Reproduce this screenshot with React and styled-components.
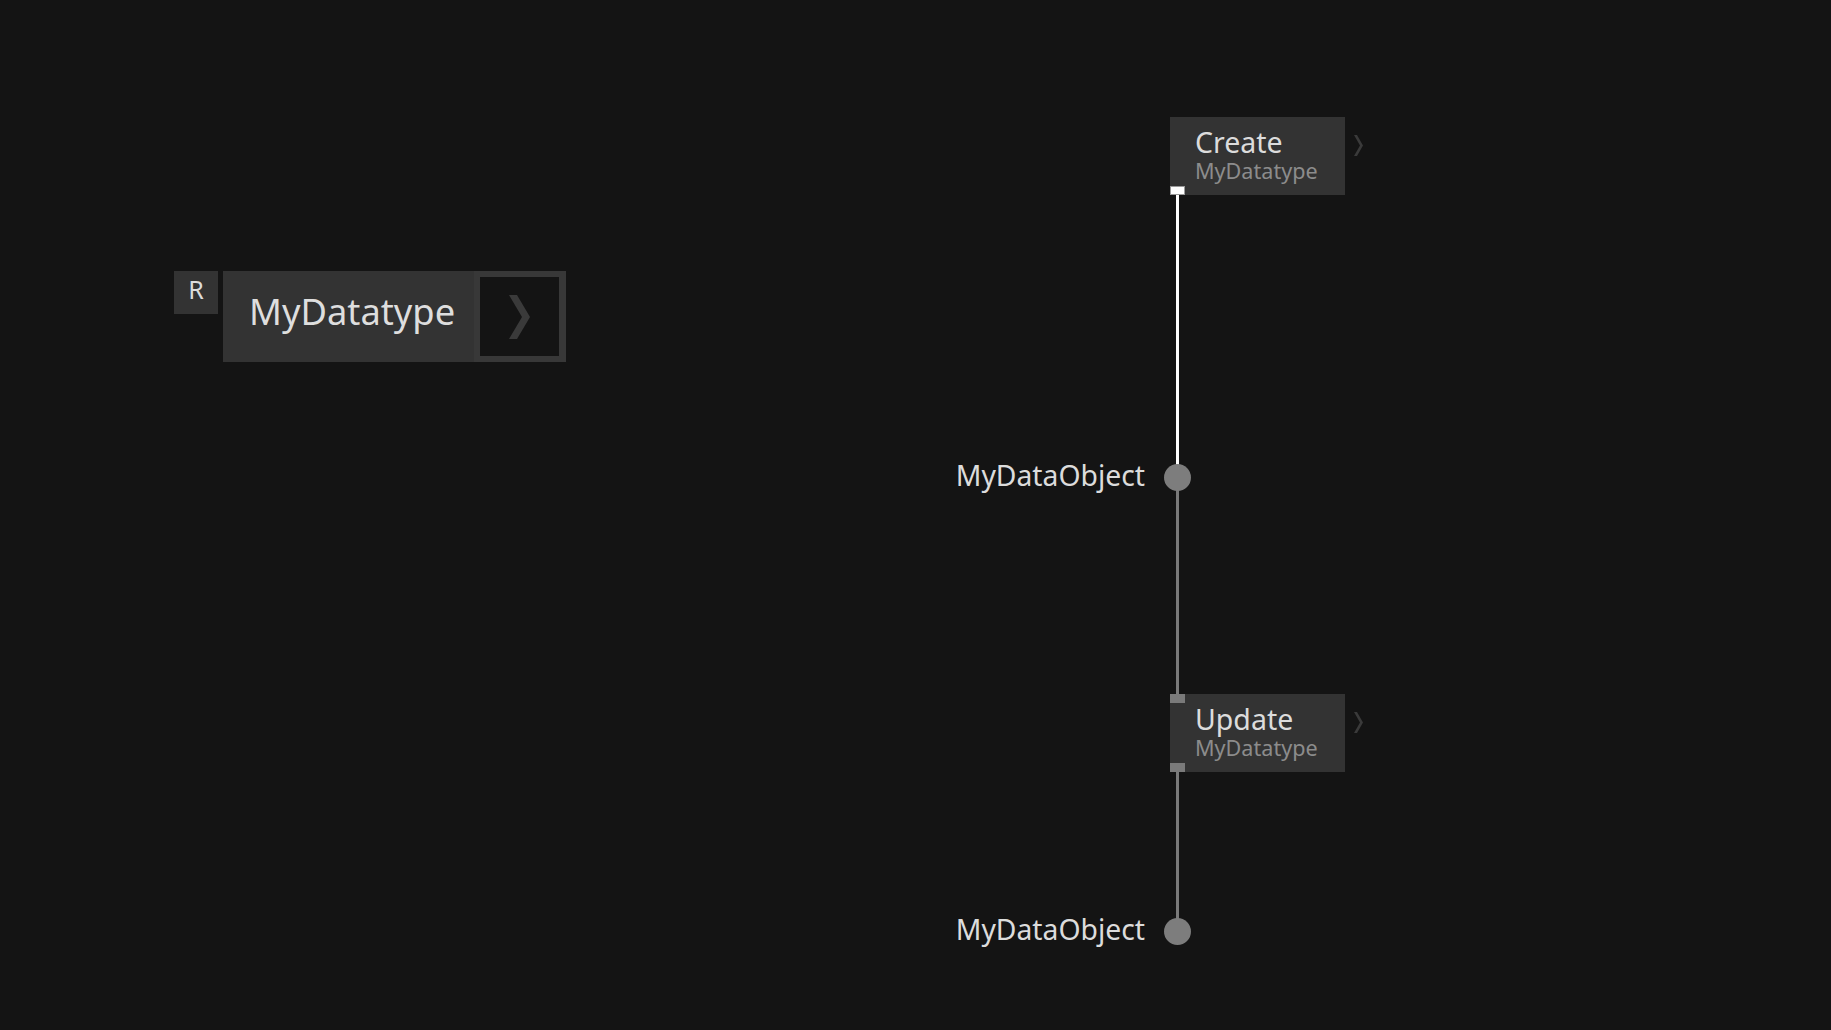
import React from "react";
import styled, { createGlobalStyle } from "styled-components";

const GlobalStyle = createGlobalStyle`
  html, body {
    margin: 0;
    padding: 0;
    background: #141414;
    font-family: "Noto Sans", "Open Sans", sans-serif;
  }
`;

const Canvas = styled.div`
  position: relative;
  width: 100vw;
  height: 100vh;
  overflow: hidden;
  background: #141414;
`;

/* ---- type node (top left) ---- */

const TypeNode = styled.div`
  position: absolute;
  left: 174px;
  top: 271px;
  display: flex;
  align-items: flex-start;
  gap: 5px;
`;

const Badge = styled.div`
  width: 44px;
  height: 43px;
  background: #333333;
  color: #dcdcdc;
  font-size: 25px;
  line-height: 37px;
  text-align: center;
`;

const TypeBody = styled.div`
  width: 343px;
  height: 91px;
  background: #333333;
  display: flex;
  align-items: stretch;
  justify-content: space-between;
  padding-left: 26px;
  box-sizing: border-box;
`;

const TypeTitle = styled.div`
  align-self: center;
  color: #dedede;
  font-size: 36.3px;
  line-height: 1;
  margin-bottom: 10px;
`;

const ExpandBox = styled.div`
  width: 79px;
  background: #141414;
  border: 6px solid #383838;
  border-right-width: 7px;
  display: flex;
  align-items: center;
  justify-content: center;
`;

/* ---- process nodes ---- */

const NodeWrap = styled.div`
  position: absolute;
  left: 1170px;
  top: ${(p) => p.$top}px;
  display: flex;
  align-items: flex-start;
  gap: 9px;
`;

const NodeBox = styled.div`
  position: relative;
  width: 175px;
  height: 78px;
  background: #333333;
  padding: 9px 0 0 25px;
  box-sizing: border-box;
`;

const NodeTitle = styled.div`
  color: #dcdcdc;
  font-size: 28.5px;
  line-height: 32px;
`;

const NodeSub = styled.div`
  color: #8c8c8c;
  font-size: 21.6px;
  line-height: 24px;
  margin-top: 1px;
`;

const Port = styled.div`
  position: absolute;
  left: 0;
  ${(p) => (p.$bottom ? "bottom: 0;" : "top: 0;")}
  width: 15px;
  height: 9px;
  box-sizing: border-box;
  background: ${(p) => (p.$active ? "#ffffff" : "#7a7a7a")};
  border: 1px solid ${(p) => (p.$active ? "#9a9a9a" : "#7a7a7a")};
`;

const SideArrow = styled.div`
  margin-top: 18px;
  flex-shrink: 0;
  display: flex;
`;

/* ---- wires and outputs ---- */

const Wire = styled.div`
  position: absolute;
  left: 1176px;
  top: ${(p) => p.$top}px;
  height: ${(p) => p.$height}px;
  width: 3px;
  background: ${(p) => (p.$active ? "#ffffff" : "#7a7a7a")};
`;

const OutputRow = styled.div`
  position: absolute;
  left: 0;
  width: 1191px;
  top: ${(p) => p.$top}px;
  height: 27px;
  display: flex;
  justify-content: flex-end;
  align-items: center;
  gap: 19px;
`;

const OutputLabel = styled.span`
  color: #dcdcdc;
  font-size: 28.3px;
  line-height: 1;
  margin-bottom: 4px;
  white-space: nowrap;
`;

const Dot = styled.div`
  width: 27px;
  height: 27px;
  border-radius: 50%;
  background: #7d7d7d;
`;

const Chevron = ({ w, h, stroke, color }) => (
  <svg width={w} height={h} viewBox={`0 0 ${w} ${h}`}>
    <polygon
      points={`0,0 ${stroke},0 ${w},${h / 2} ${stroke},${h} 0,${h} ${w - stroke},${h / 2}`}
      fill={color}
    />
  </svg>
);

const ProcessNode = ({ top, title, sub, topPort, bottomActive }) => (
  <NodeWrap $top={top}>
    <NodeBox>
      <NodeTitle>{title}</NodeTitle>
      <NodeSub>{sub}</NodeSub>
      {topPort && <Port />}
      <Port $bottom $active={bottomActive} />
    </NodeBox>
    <SideArrow>
      <Chevron w={9} h={21} stroke={3} color="#3a3a3a" />
    </SideArrow>
  </NodeWrap>
);

const Output = ({ top, label }) => (
  <OutputRow $top={top}>
    <OutputLabel>{label}</OutputLabel>
    <Dot />
  </OutputRow>
);

export default function App() {
  return (
    <>
      <GlobalStyle />
      <Canvas>
        <TypeNode>
          <Badge>R</Badge>
          <TypeBody>
            <TypeTitle>MyDatatype</TypeTitle>
            <ExpandBox>
              <Chevron w={21} h={44} stroke={8} color="#3a3a3a" />
            </ExpandBox>
          </TypeBody>
        </TypeNode>

        <Wire $active $top={195} $height={272} />
        <Wire $top={490} $height={205} />
        <Wire $top={771} $height={149} />

        <ProcessNode top={117} title="Create" sub="MyDatatype" bottomActive />
        <ProcessNode top={694} title="Update" sub="MyDatatype" topPort />

        <Output top={464} label="MyDataObject" />
        <Output top={918} label="MyDataObject" />
      </Canvas>
    </>
  );
}
